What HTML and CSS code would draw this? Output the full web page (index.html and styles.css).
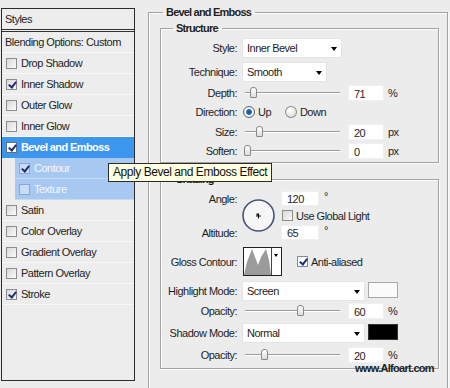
FILE: index.html
```html
<!doctype html>
<html>
<head>
    <meta charset="utf-8">
    <title>Layer Style</title>
    <link rel="stylesheet" href="styles.css">
</head>
<body>
<div class="page">
    <div class="styles-panel">
        <div class="panel-head">Styles</div>
        <div class="panel-blend">Blending Options: Custom</div>
        <ul class="fx-list">
            <li class="fx"><span class="cb"></span>Drop Shadow</li>
            <li class="fx"><span class="cb on"></span>Inner Shadow</li>
            <li class="fx"><span class="cb"></span>Outer Glow</li>
            <li class="fx"><span class="cb"></span>Inner Glow</li>
            <li class="fx active"><span class="cb on"></span>Bevel and Emboss</li>
            <li class="fx sub"><span class="cb on"></span>Contour</li>
            <li class="fx sub"><span class="cb"></span>Texture</li>
            <li class="fx"><span class="cb"></span>Satin</li>
            <li class="fx"><span class="cb"></span>Color Overlay</li>
            <li class="fx"><span class="cb"></span>Gradient Overlay</li>
            <li class="fx"><span class="cb"></span>Pattern Overlay</li>
            <li class="fx"><span class="cb on"></span>Stroke</li>
        </ul>
    </div>

    <fieldset class="group main">
        <legend>Bevel and Emboss</legend>

        <fieldset class="group structure">
            <legend>Structure</legend>
            <div class="field f-style">
                <span class="lbl">Style:</span>
                <div class="select w-style">Inner Bevel</div>
            </div>
            <div class="field f-tech">
                <span class="lbl">Technique:</span>
                <div class="select w-tech">Smooth</div>
            </div>
            <div class="field f-num">
                <span class="lbl">Depth:</span>
                <div class="slider"><span class="thumb" style="left:8px"></span></div>
                <div class="num">71</div><span class="unit">%</span>
            </div>
            <div class="field f-dir">
                <span class="lbl">Direction:</span>
                <span class="opt"><span class="radio on"></span>Up</span>
                <span class="opt"><span class="radio"></span>Down</span>
            </div>
            <div class="field f-num">
                <span class="lbl">Size:</span>
                <div class="slider"><span class="thumb" style="left:14px"></span></div>
                <div class="num">20</div><span class="unit">px</span>
            </div>
            <div class="field f-num f-soften">
                <span class="lbl">Soften:</span>
                <div class="slider"><span class="thumb" style="left:2px"></span></div>
                <div class="num">0</div><span class="unit">px</span>
            </div>
        </fieldset>

        <fieldset class="group shading">
            <legend>Shading</legend>
            <div class="angle-block">
                <span class="lbl a-lbl">Angle:</span>
                <div class="dial">
                    <svg width="33" height="33" viewBox="0 0 33 33">
                        <circle cx="16.5" cy="16.5" r="15.5" fill="#f6f6f6" stroke="#48537a" stroke-width="1.6"/>
                        <path d="M14 17h5M16.5 14.5v5" stroke="#111" stroke-width="1"/>
                        <rect x="14.5" y="14.5" width="2" height="2" fill="#111"/>
                    </svg>
                </div>
                <div class="a-val"><div class="num small">120</div><span class="deg">°</span></div>
                <div class="a-global"><span class="cb"></span>Use Global Light</div>
                <span class="lbl b-lbl">Altitude:</span>
                <div class="b-val"><div class="num small">65</div><span class="deg">°</span></div>
            </div>
            <div class="field f-gloss">
                <span class="lbl">Gloss Contour:</span>
                <div class="contour">
                    <svg width="27" height="27" viewBox="0 0 27 27">
                        <path d="M0 27 L3 14 L8 1 L11 9 L14 17 L17 9 L22 1 L25 12 L27 27 Z" fill="#9b9b9b"/>
                    </svg>
                    <span class="c-arrow"></span>
                </div>
                <span class="cb on aa"></span><span>Anti-aliased</span>
            </div>
            <div class="field f-mode">
                <span class="lbl">Highlight Mode:</span>
                <div class="select w-mode">Screen</div>
                <span class="swatch light"></span>
            </div>
            <div class="field f-op">
                <span class="lbl">Opacity:</span>
                <div class="slider"><span class="thumb" style="left:55px"></span></div>
                <div class="num">60</div><span class="unit">%</span>
            </div>
            <div class="field f-mode f-shadow">
                <span class="lbl">Shadow Mode:</span>
                <div class="select w-mode">Normal</div>
                <span class="swatch dark"></span>
            </div>
            <div class="field f-op f-op2">
                <span class="lbl">Opacity:</span>
                <div class="slider"><span class="thumb" style="left:19px"></span></div>
                <div class="num">20</div><span class="unit">%</span>
            </div>
        </fieldset>
    </fieldset>

    <div class="tooltip">Apply Bevel and Emboss Effect</div>
    <div class="watermark">www.Alfoart.com</div>
</div>
</body>
</html>
```

FILE: styles.css
```css
* {
  box-sizing: border-box;
}

html, body {
  margin: 0;
  height: 388px;
  overflow: hidden;
  background: #ececec;
}

body {
  font: 11px "Liberation Sans", Arial, sans-serif;
  letter-spacing: -0.5px;
  color: #1e1e1e;
}

.page {
  position: relative;
  display: flex;
  align-items: flex-start;
  height: 388px;
}

/* ---- left list ---- */
.styles-panel {
  width: 134px;
  height: 373px;
  margin: 8px 0 0 1px;
  border: 1px solid #2b2b2b;
  background: #ededed;
}

.panel-head {
  height: 23px;
  padding: 0 0 0 3px;
  line-height: 20px;
  border-bottom: 3px double #303030;
}

.panel-blend {
  height: 21px;
  padding-left: 3px;
  line-height: 20px;
  border-bottom: 1px solid #f9f9f9;
}

.fx-list {
  list-style: none;
  margin: 0;
  padding: 0;
}

.fx {
  display: flex;
  align-items: center;
  height: 21px;
  border-bottom: 1px solid #f8f8f8;
  padding-left: 4px;
}

.fx .cb {
  margin-right: 4px;
}

.fx.active {
  background: #3d96ee;
  color: #fff;
  font-weight: bold;
  letter-spacing: -0.6px;
  border-bottom-color: #3d96ee;
}

.fx.active .cb {
  background: #fff;
  border-color: #5a6f8c;
}

.fx.sub {
  margin-left: 13px;
  padding-left: 4px;
  background: #a6c8f1;
  color: #f4f8ff;
  border-bottom-color: #c4daf5;
}

.fx.sub .cb {
  background: #c8dcf6;
  border-color: #8aa7cf;
}

/* ---- checkbox / radio ---- */
.cb {
  position: relative;
  display: inline-block;
  flex: none;
  width: 11px;
  height: 11px;
  border: 1px solid #8d8d8d;
  background: linear-gradient(135deg, #d8d8d8, #fbfbfb);
}

.cb.on::after {
  content: "";
  position: absolute;
  left: 3px;
  top: 0;
  width: 3px;
  height: 6px;
  border: solid #1f2f78;
  border-width: 0 2px 2px 0;
  transform: rotate(38deg);
}

.radio {
  display: inline-block;
  width: 12px;
  height: 12px;
  border-radius: 50%;
  border: 1px solid #8c8c8c;
  background: radial-gradient(circle at 40% 35%, #fff, #d6d6d6);
  margin: 0 3px 0 1px;
}

.radio.on {
  border-color: #4b5f86;
  background: radial-gradient(circle, #1c4f8f 0, #2a6fb8 2.5px, #ffffff 3.5px, #dfe6f0 6px);
}

/* ---- groups ---- */
.group {
  margin: 0;
  padding: 0;
  min-width: 0;
  border: 1px solid #a3a3a3;
  box-shadow: inset 1px 1px 0 #fdfdfd, 1px 1px 0 #fdfdfd;
}

.group legend {
  font-weight: bold;
  letter-spacing: -0.8px;
  line-height: 13px;
  padding: 0 4px 0 3px;
}

.main {
  width: 300px;
  height: 392px;
  margin: 6px 0 0 13px;
  padding: 3px 0 0 11px;
}

.main > legend {
  margin-left: 3px;
}

.structure {
  width: 279px;
  padding: 1px 0 3px 0;
}

.structure > legend,
.shading > legend {
  margin-left: 12px;
}

.shading {
  width: 279px;
  margin-top: 10px;
  padding: 4px 0 5px 0;
}

/* ---- rows ---- */
.field {
  display: flex;
  align-items: center;
  height: 17px;
  white-space: nowrap;
}

.lbl {
  flex: none;
  width: 76px;
  margin-right: 5px;
  text-align: right;
}

.f-style, .f-tech {
  height: 24px;
}

.f-dir {
  height: 22px;
}

.f-soften {
  margin-top: 2px;
}

.select {
  display: flex;
  align-items: center;
  height: 20px;
  padding-left: 4px;
  background: #fff;
  border: 1px solid #e4e4e4;
}

.select::after {
  content: "";
  margin: 1px 4px 0 auto;
  border-left: 3.5px solid transparent;
  border-right: 3.5px solid transparent;
  border-top: 4px solid #000;
}

.w-style { width: 100px; }
.w-tech { width: 85px; }
.w-mode { width: 123px; }

.slider {
  position: relative;
  flex: none;
  width: 98px;
  height: 16px;
}

.slider::before {
  content: "";
  position: absolute;
  left: 3px;
  right: 0;
  top: 7px;
  height: 1px;
  background: #9a9a9a;
  box-shadow: 0 1px 0 #fff;
}

.thumb {
  position: absolute;
  top: 2px;
  width: 7px;
  height: 11px;
  border: 1px solid #8a8a8a;
  border-radius: 3px 3px 1px 1px;
  background: linear-gradient(#fff, #dcdcdc);
}

.num {
  flex: none;
  width: 36px;
  height: 16px;
  margin-left: 8px;
  padding-left: 5px;
  line-height: 16px;
  background: #fff;
  border: 1px solid #f0f0f0;
}

.num.small {
  width: 38px;
  height: 15px;
  margin-left: 0;
  line-height: 14px;
}

.unit {
  margin-left: 4px;
}

.opt {
  display: inline-flex;
  align-items: center;
  width: 42px;
}

/* ---- shading ---- */
.angle-block {
  display: grid;
  grid-template-columns: 76px 38px auto;
  grid-template-rows: 17px 17px 17px;
  column-gap: 0;
  align-items: center;
}

.angle-block .lbl {
  margin: 0;
}

.a-lbl { grid-column: 1; grid-row: 1; }
.b-lbl { grid-column: 1; grid-row: 3; }

.dial {
  grid-column: 2;
  grid-row: 1 / 4;
  margin-left: 5px;
  width: 33px;
  height: 33px;
}

.dial svg {
  display: block;
}

.a-val, .b-val, .a-global {
  grid-column: 3;
  display: flex;
  align-items: center;
  margin-left: 6px;
}

.a-val { grid-row: 1; }
.a-global { grid-row: 2; margin-left: 7px; }
.b-val { grid-row: 3; }

.a-global .cb {
  margin-right: 3px;
}

.deg {
  align-self: flex-start;
  margin-left: 5px;
  margin-top: -1px;
}

.f-gloss {
  height: 29px;
  margin-top: 6px;
}

.contour {
  display: flex;
  width: 39px;
  height: 29px;
  margin-left: 1px;
  border: 1px solid #222;
  background: #fff;
}

.contour svg {
  display: block;
  margin: 0;
}

.c-arrow {
  width: 10px;
  border-left: 1px solid #444;
  position: relative;
}

.c-arrow::after {
  content: "";
  position: absolute;
  left: 2px;
  top: 6px;
  border-left: 2.5px solid transparent;
  border-right: 2.5px solid transparent;
  border-top: 3px solid #000;
}

.aa {
  margin: 0 3px 0 15px;
  border-color: #7b8ea8;
  background: #fff;
}

.f-mode {
  height: 20px;
  margin-top: 5px;
}

.f-shadow {
  margin-top: 4px;
}

.swatch {
  align-self: flex-start;
  width: 30px;
  height: 16px;
  margin: 1px 0 0 3px;
  border: 1px solid #a8a8a8;
}

.swatch.light { background: #fafafa; }
.swatch.dark { background: #000; border-color: #333; }

.f-op {
  height: 16px;
  margin-top: 2px;
}

.f-op2 {
  margin-top: 4px;
}

/* ---- overlays ---- */
.tooltip {
  position: absolute;
  left: 108px;
  top: 163px;
  height: 19px;
  padding: 0 4px;
  line-height: 17px;
  font-size: 12px;
  letter-spacing: -0.45px;
  color: #111;
  background: #ffffe1;
  border: 1px solid #2a2a2a;
}

.watermark {
  position: absolute;
  left: 355px;
  top: 362px;
  font-weight: bold;
  font-size: 11px;
  letter-spacing: -0.7px;
  color: #222;
}
```
